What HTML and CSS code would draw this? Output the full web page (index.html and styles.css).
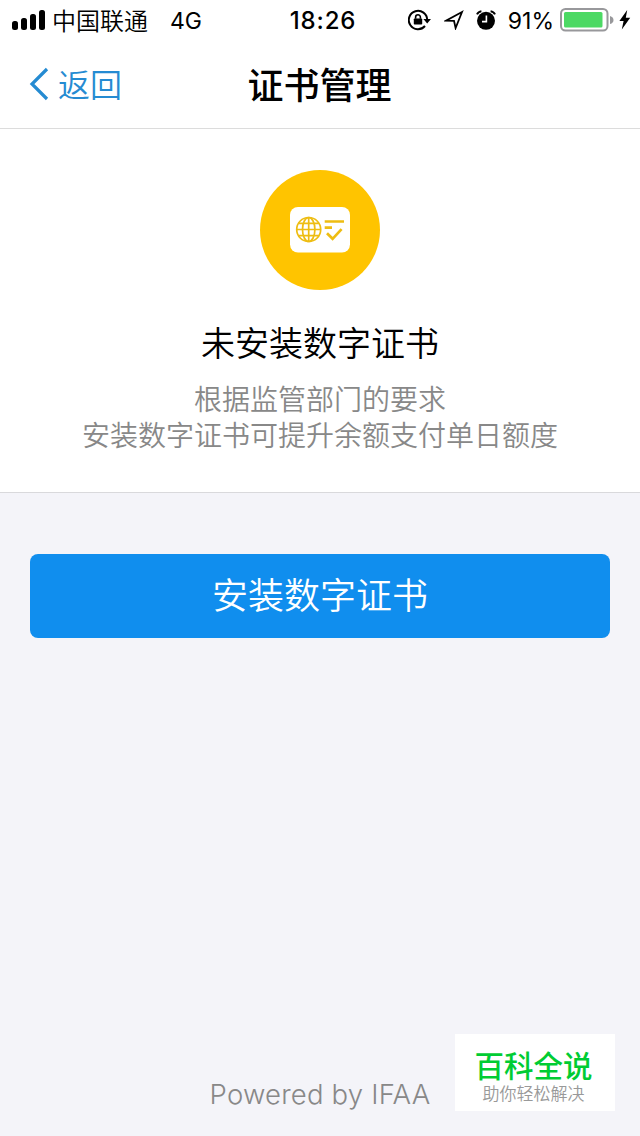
FILE: index.html
```html
<!DOCTYPE html>
<html lang="zh-CN">
<head>
  <meta charset="utf-8" />
  <meta name="viewport" content="width=device-width, initial-scale=1.0" />

  <title>证书管理</title>

  <link rel="stylesheet" href="styles.css">
</head>
<body>
  <div class="status-bar">
    <div class="status-left">
      <svg class="signal" width="34" height="20" viewBox="0 0 34 20">
        <rect x="0" y="11" width="6" height="9" rx="2.5" />
        <rect x="9" y="8" width="6" height="12" rx="2.5" />
        <rect x="18" y="4" width="6" height="16" rx="2.5" />
        <rect x="27" y="0" width="6" height="20" rx="2.5" />
      </svg>
      <span class="carrier">中国联通</span>
      <span class="network">4G</span>
    </div>
    <div class="status-time">18:26</div>
    <div class="status-right">
      <svg class="icon-lock" width="23" height="22" viewBox="0 0 23 22">
        <path d="M17 17A9.2 9.2 0 1 1 19.2 11" fill="none" stroke="#000" stroke-width="2" />
        <path d="M15.4 10H23L19.2 14.6z" />
        <path d="M7.6 9.8V8.2a2.4 2.4 0 0 1 4.8 0v1.6" fill="none" stroke="#000" stroke-width="1.6" />
        <rect x="5.8" y="9.4" width="8.4" height="6.2" rx="0.8" />
      </svg>
      <svg class="icon-location" width="20" height="20" viewBox="0 0 20 20">
        <path d="M18 2L2 10.6l8 .2L11.6 18z" fill="none" stroke="#000" stroke-width="1.8" />
      </svg>
      <svg class="icon-alarm" width="20" height="20" viewBox="0 0 20 20">
        <circle cx="10" cy="10.8" r="9" />
        <path d="M1 4.4Q2.4 1.6 5.4 1.2M14.6 1.2Q17.6 1.6 19 4.4" fill="none" stroke="#000" stroke-width="2" />
        <path d="M10.4 5.6v6H6" fill="none" stroke="#fff" stroke-width="1.6" />
      </svg>
      <span class="percent">91%</span>
      <svg class="icon-battery" width="54" height="24" viewBox="0 0 54 24">
        <rect x="1" y="1" width="46.5" height="21.5" rx="4.5" fill="#fff" stroke="#98989b" stroke-width="2" />
        <rect x="4" y="4" width="38.5" height="15.5" rx="1.5" fill="#4cd964" />
        <path d="M50 8q3.5 1 3.5 4t-3.5 4z" fill="#98989b" />
      </svg>
      <svg class="icon-bolt" width="12" height="20" viewBox="0 0 12 20">
        <path d="M8.2 0L0.4 11h4.2L2.8 19.4L11.2 7.8H6.8z" />
      </svg>
    </div>
  </div>

  <div class="nav-bar">
    <a class="nav-back">
      <svg width="20" height="34" viewBox="0 0 20 34">
        <path d="M18 2L3 17l15 15" fill="none" stroke="#258bd2" stroke-width="3.2" />
      </svg>
      <span>返回</span>
    </a>
    <h1 class="nav-title">证书管理</h1>
  </div>

  <div class="hero">
    <svg class="hero-icon" width="120" height="120" viewBox="0 0 120 120">
      <circle cx="60" cy="60" r="60" fill="#ffc400" />
      <rect x="30" y="37" width="60" height="45.5" rx="8" fill="#fff" />
      <g fill="none" stroke="#eebd12" stroke-width="1.7">
        <circle cx="48.7" cy="59.5" r="12" />
        <ellipse cx="48.7" cy="59.5" rx="6.2" ry="12" />
        <path d="M48.7 47.5v24M36.7 59.5h24M38.5 53.3h20.4M38.5 65.7h20.4" />
      </g>
      <path d="M64.7 51.5h19.3M64.7 57.6h7.3M67 63.2l5.6 5.6 9-9.6" fill="none" stroke="#eebd12" stroke-width="2.7" />
    </svg>
    <h2 class="hero-title">未安装数字证书</h2>
    <p class="hero-text">根据监管部门的要求<br>安装数字证书可提升余额支付单日额度</p>
  </div>

  <div class="main">
    <button class="install-button">安装数字证书</button>
  </div>

  <div class="footer">Powered by IFAA</div>

  <div class="watermark">
    <div class="watermark-title">百科全说</div>
    <div class="watermark-text">助你轻松解决</div>
  </div>
</body>
</html>
```
FILE: styles.css
```css
*, *::before, *::after {
  box-sizing: border-box;
}

body {
  margin: 0;
  height: 1136px;
  display: flex;
  flex-direction: column;
  background: #f4f4f9;
  color: #000;
  font-family: Inter, "Noto Sans CJK SC", sans-serif;
  overflow: hidden;
}

svg {
  display: block;
  flex: none;
}

.status-bar {
  display: grid;
  grid-template-columns: 1fr auto 1fr;
  align-items: center;
  height: 40px;
  padding: 0 9px 0 12px;
  background: #fff;
  font-size: 24px;
  line-height: 36px;
  white-space: nowrap;
}

.status-left, .status-right {
  display: flex;
  align-items: center;
}

.carrier {
  margin-left: 6px;
  padding-top: 3px;
  font-weight: 350;
}

.network {
  margin-left: 22px;
  padding-top: 2px;
  font-size: 23px;
}

.status-time {
  padding: 2px 0 0 3px;
  font-size: 24px;
  font-weight: 500;
  letter-spacing: 0.9px;
}

.status-right {
  justify-content: flex-end;
}

.icon-location {
  margin-left: 13px;
}

.icon-alarm {
  margin-left: 12px;
}

.percent {
  margin-left: 12px;
  padding-top: 2px;
  font-size: 23px;
}

.icon-battery {
  margin-left: 6px;
}

.icon-bolt {
  margin-left: 5px;
}

.nav-bar {
  display: grid;
  grid-template-columns: 1fr auto 1fr;
  align-items: center;
  height: 89px;
  padding: 0 30px 0 29px;
  background: #fff;
  border-bottom: 1px solid #dcdcdc;
}

.nav-back {
  display: flex;
  align-items: center;
  gap: 9px;
  color: #258bd2;
  font-size: 32px;
  font-weight: 350;
  line-height: 44px;
}

.nav-back span {
  padding-top: 3px;
}

.nav-title {
  margin: 0;
  padding-top: 4px;
  font-size: 36px;
  font-weight: 500;
  line-height: 50px;
}

.hero {
  display: flex;
  flex-direction: column;
  align-items: center;
  height: 364px;
  padding-top: 41px;
  background: #fff;
  border-bottom: 1px solid #d9d9dc;
  text-align: center;
}

.hero-title {
  margin: 30px 0 0;
  font-size: 34px;
  font-weight: 350;
  line-height: 48px;
}

.hero-text {
  margin: 14px 0 0;
  color: #888;
  font-size: 28px;
  font-weight: 350;
  line-height: 36px;
}

.main {
  flex: 1;
  padding: 61px 30px 0;
}

.install-button {
  display: block;
  width: 100%;
  height: 84px;
  padding: 1px 0 0;
  border: 0;
  border-radius: 8px;
  background: #108eee;
  color: #fff;
  font-family: inherit;
  font-size: 36px;
  font-weight: 350;
  line-height: 83px;
}

.footer {
  padding-bottom: 22px;
  color: #888;
  font-size: 27.5px;
  font-weight: 350;
  letter-spacing: 0.2px;
  line-height: 40px;
  text-align: center;
}

.watermark {
  position: absolute;
  right: 25px;
  bottom: 25px;
  width: 160px;
  height: 77px;
  padding: 13px 3px 0 0;
  background: #fff;
  text-align: center;
}

.watermark-title {
  color: #0c3;
  font-size: 29.5px;
  font-weight: 500;
  line-height: 38px;
}

.watermark-text {
  color: #999;
  font-size: 17px;
  font-weight: 350;
  line-height: 18px;
}
```
